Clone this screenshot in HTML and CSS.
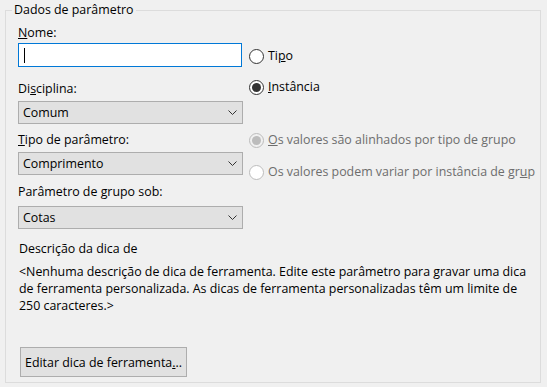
FILE: index.html
```html
<!DOCTYPE html>
<html lang="pt">
<head>
  <meta charset="UTF-8">
  <title>Dados de parâmetro</title>
  <link rel="stylesheet" href="styles.css">
</head>
<body>
  <fieldset class="group">
    <legend>Dados de parâmetro</legend>

    <div class="columns">
      <!-- Left: name and dropdowns -->
      <div class="fields">
        <div class="field-label"><u>N</u>ome:</div>
        <div class="text-box"><span class="caret"></span></div>

        <div class="field-label label-discipline">Di<u>s</u>ciplina:</div>
        <div class="combo">
          <span>Comum</span>
          <svg class="chevron" width="9" height="5" viewBox="0 0 9 5"><polyline points="0.5,0.5 4.5,4.5 8.5,0.5" fill="none" stroke="#333" stroke-width="1"/></svg>
        </div>

        <div class="field-label label-type"><u>T</u>ipo de parâmetro:</div>
        <div class="combo">
          <span>Comprimento</span>
          <svg class="chevron" width="9" height="5" viewBox="0 0 9 5"><polyline points="0.5,0.5 4.5,4.5 8.5,0.5" fill="none" stroke="#333" stroke-width="1"/></svg>
        </div>

        <div class="field-label label-group">Parâmetro de grupo sob:</div>
        <div class="combo">
          <span>Cotas</span>
          <svg class="chevron" width="9" height="5" viewBox="0 0 9 5"><polyline points="0.5,0.5 4.5,4.5 8.5,0.5" fill="none" stroke="#333" stroke-width="1"/></svg>
        </div>
      </div>

      <!-- Right: radio options -->
      <div class="options">
        <div class="radio radio-tipo"><span class="mark"></span>Ti<u>p</u>o</div>
        <div class="radio radio-instancia"><span class="mark checked"></span><u>I</u>nstância</div>
        <div class="radio disabled radio-aligned"><span class="mark checked"></span><u>O</u>s valores são alinhados por tipo de grupo</div>
        <div class="radio disabled radio-vary"><span class="mark"></span>Os valores podem variar por instância de gr<u>u</u>p</div>
      </div>
    </div>

    <div class="tooltip-title">Descrição da dica de</div>
    <p class="tooltip-text">&lt;Nenhuma descrição de dica de ferramenta. Edite este parâmetro para gravar uma dica de ferramenta personalizada. As dicas de ferramenta personalizadas têm um limite de 250 caracteres.&gt;</p>

    <button class="btn">Editar dica de ferramenta<u>.</u>..</button>
  </fieldset>
</body>
</html>
```

FILE: styles.css
```css
* {
  margin: 0;
  padding: 0;
  box-sizing: border-box;
  font-family: "Open Sans", "Noto Sans", sans-serif;
}
body {
  height: 387px;
  padding: 2px 6px 4px 5px;
  display: flex;
  background: #f0f0f0;
  color: #000;
  font-size: 12.4px;
  line-height: 16px;
  overflow: hidden;
}
u {
  text-decoration: underline;
  text-underline-offset: 1px;
}
.group {
  flex: 1;
  border: 1px solid #dcdcdc;
  padding: 0 0 0 12px;
  min-width: 0;
}
.group legend {
  margin-left: -6px;
  padding: 0 2px;
  line-height: 16px;
}
.columns {
  display: flex;
  padding-top: 7px;
}
.fields {
  width: 225px;
  display: flex;
  flex-direction: column;
}
.field-label {
  height: 16px;
}
.label-discipline {
  margin-top: 14px;
}
.label-type {
  margin-top: 8px;
}
.label-group {
  margin-top: 9px;
}
.text-box {
  margin-top: 2px;
  width: 224px;
  height: 24px;
  border: 1px solid #0078d7;
  background: #fff;
  display: flex;
  align-items: center;
  padding-left: 5px;
}
.caret {
  width: 1px;
  height: 15px;
  background: #000;
}
.combo {
  margin-top: 4px;
  height: 23px;
  border: 1px solid #adadad;
  background: #e1e1e1;
  display: flex;
  align-items: center;
  justify-content: space-between;
  padding: 0 5px 0 4px;
}
.label-group + .combo {
  margin-top: 6px;
}
.chevron {
  display: block;
}
.options {
  flex: 1;
  min-width: 0;
  padding-left: 6px;
  white-space: nowrap;
  display: flex;
  flex-direction: column;
}
.radio {
  display: flex;
  align-items: center;
  height: 16px;
}
.radio .mark {
  flex: none;
  width: 15px;
  height: 15px;
  margin-right: 4px;
  border: 1px solid #333;
  border-radius: 50%;
  background: #fff;
  display: flex;
  align-items: center;
  justify-content: center;
}
.radio .mark.checked::after {
  content: "";
  width: 9px;
  height: 9px;
  border-radius: 50%;
  background: #333;
}
.radio.disabled {
  color: #6d6d6d;
}
.radio.disabled .mark {
  border-color: #bcbcbc;
}
.radio.disabled .mark.checked {
  background: #f0f0f0;
}
.radio.disabled .mark.checked::after {
  background: #bcbcbc;
}
.radio-tipo {
  margin-top: 23px;
}
.radio-instancia {
  margin-top: 15px;
}
.radio-aligned {
  margin-top: 37px;
}
.radio-vary {
  margin-top: 16px;
}
.tooltip-title {
  margin-top: 12px;
  padding-left: 1px;
}
.tooltip-text {
  margin-top: 6px;
  padding-left: 1px;
  padding-right: 10px;
  line-height: 17px;
}
.btn {
  margin-top: 33px;
  margin-left: 2px;
  width: 167px;
  height: 30px;
  border: 1px solid #adadad;
  background: #e1e1e1;
  font-size: 12.4px;
  color: #000;
  text-align: center;
}
```
